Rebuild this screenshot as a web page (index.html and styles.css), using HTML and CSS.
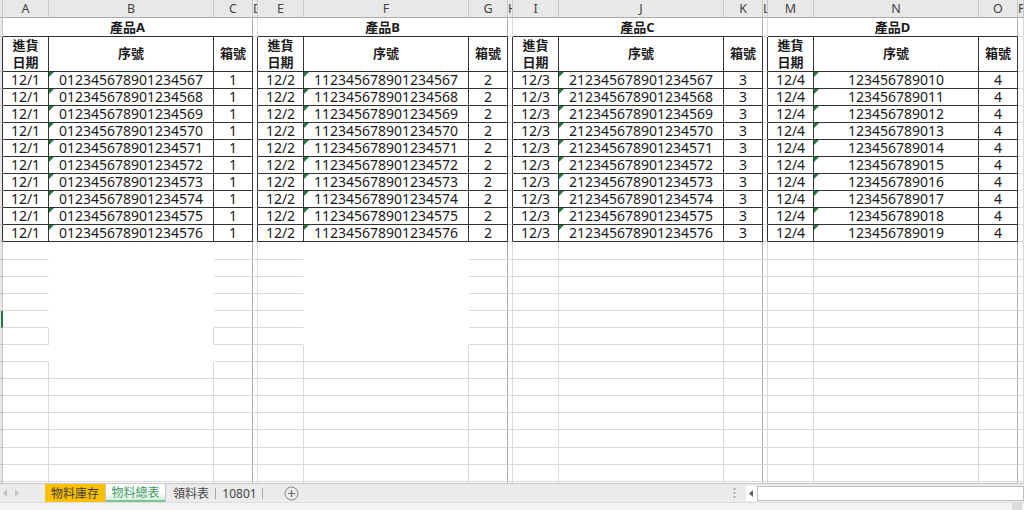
FILE: index.html
```html
<!DOCTYPE html>
<html lang="zh-TW">
<head>
    <meta charset="UTF-8">
    <meta name="viewport" content="width=device-width, initial-scale=1.0">
    <title>物料總表</title>
    <link rel="stylesheet" href="styles.css">
</head>
<body>
    <!-- 工作表 -->
    <div class="sheet">
        <table class="grid">
            <colgroup>
                <col class="w-rh">
                <col class="w-date"><col class="w-serial"><col class="w-box"><col class="w-sp">
                <col class="w-date"><col class="w-serial"><col class="w-box"><col class="w-sp">
                <col class="w-date"><col class="w-serial"><col class="w-box"><col class="w-sp">
                <col class="w-date"><col class="w-serial"><col class="w-box"><col class="w-p">
            </colgroup>
            <thead><tr class="r-letters" id="letters"></tr></thead>
            <tbody id="rows"></tbody>
        </table>
    </div>

    <!-- 工作表標籤 -->
    <div class="tabbar">
        <div class="nav">
            <svg width="6" height="8" viewBox="0 0 6 8"><path d="M5 0 L1 4 L5 8 Z" fill="#c4c4c4"/></svg>
            <svg width="6" height="8" viewBox="0 0 6 8"><path d="M1 0 L5 4 L1 8 Z" fill="#c4c4c4"/></svg>
        </div>
        <div class="tab tab-stock">物料庫存</div>
        <div class="tab tab-active">物料總表</div>
        <div class="tab tab-sep tab-issue">領料表</div>
        <div class="tab tab-sep tab-num">10801</div>
        <div class="add-sheet">
            <svg width="15" height="15" viewBox="0 0 15 15">
                <circle cx="7.5" cy="7.5" r="6.5" fill="none" stroke="#8a8a8a" stroke-width="1"/>
                <path d="M7.5 4 V11 M4 7.5 H11" stroke="#6e6e6e" stroke-width="1.2"/>
            </svg>
        </div>
        <div class="split">
            <svg width="3" height="12" viewBox="0 0 3 12">
                <rect x="0.5" y="1" width="2" height="2" fill="#b0b0b0"/>
                <rect x="0.5" y="5" width="2" height="2" fill="#b0b0b0"/>
                <rect x="0.5" y="9" width="2" height="2" fill="#b0b0b0"/>
            </svg>
        </div>
        <div class="hscroll">
            <div class="scroll-btn">
                <svg width="5" height="7" viewBox="0 0 5 7"><path d="M4 0 L0 3.5 L4 7 Z" fill="#606060"/></svg>
            </div>
            <div class="scroll-track"></div>
        </div>
    </div>
    <div class="statusbar"><span class="corner"></span></div>

    <script>
        // 四組產品資料
        const products = [
            { name: '產品A', date: '12/1', prefix: '0123456789012345', start: 67, box: '1' },
            { name: '產品B', date: '12/2', prefix: '1123456789012345', start: 67, box: '2' },
            { name: '產品C', date: '12/3', prefix: '2123456789012345', start: 67, box: '3' },
            { name: '產品D', date: '12/4', prefix: '1234567890', start: 10, box: '4' }
        ];
        const letters = ['', 'A', 'B', 'C', 'D', 'E', 'F', 'G', 'H', 'I', 'J', 'K', 'L', 'M', 'N', 'O', 'P'];

        // 空白列中沒有格線的儲存格
        function emptyCellClass(col, k) {
            if (col === 1 && k <= 6 && k !== 5) return 'nr';
            if (col === 2 && k <= 6) return k === 5 ? 'nb' : 'nb nr';
            if (col === 5 && k <= 5) return 'nr';
            if (col === 6 && k <= 5) return 'nb nr';
            return '';
        }

        function buildSheet() {
            document.getElementById('letters').innerHTML =
                letters.map((l, i) => `<th class="${i === 0 ? 'rh' : ''}">${l}</th>`).join('');

            let html = '';

            // 標題列
            html += '<tr class="r-title"><td class="rh"></td>';
            products.forEach(p => {
                html += `<td colspan="3" class="title">${p.name}</td><td class="sp"></td>`;
            });
            html += '</tr>';

            // 欄位名稱
            html += '<tr class="r-head"><td class="rh edge"></td>';
            products.forEach((p, b) => {
                html += '<td class="hd box">進貨<br>日期</td><td class="hd box">序號</td><td class="hd box">箱號</td>';
                html += `<td class="${b < 3 ? 'edge' : ''}"></td>`;
            });
            html += '</tr>';

            // 資料列
            for (let i = 0; i < 10; i++) {
                html += '<tr class="r-data"><td class="rh edge"></td>';
                products.forEach((p, b) => {
                    html += `<td class="box">${p.date}</td>`;
                    html += `<td class="box txt">${p.prefix}${p.start + i}</td>`;
                    html += `<td class="box">${p.box}</td>`;
                    html += `<td class="${b < 3 ? 'edge' : ''}"></td>`;
                });
                html += '</tr>';
            }

            // 空白列
            for (let k = 0; k < 15; k++) {
                html += `<tr class="r-empty"><td class="rh${k === 4 ? ' sel' : ''}"></td>`;
                for (let col = 1; col <= 16; col++) {
                    let cls = emptyCellClass(col, k);
                    if (col % 4 === 3) cls += ' end';
                    html += `<td class="${cls.trim()}"></td>`;
                }
                html += '</tr>';
            }

            document.getElementById('rows').innerHTML = html;
        }

        document.addEventListener('DOMContentLoaded', buildSheet);
    </script>
</body>
</html>
```

FILE: styles.css
```css
* {
    box-sizing: border-box;
}

body {
    margin: 0;
    width: 1024px;
    height: 510px;
    overflow: hidden;
    background: #fff;
    font-family: "Noto Sans", "Noto Sans CJK TC", sans-serif;
    color: #1a1a1a;
}

/* 工作表 */
.sheet {
    height: 483px;
    overflow: hidden;
}

.grid {
    border-collapse: separate;
    border-spacing: 0;
    table-layout: fixed;
    width: 1024px;
}

.w-rh { width: 3px; }
.w-date { width: 46px; }
.w-serial { width: 165px; }
.w-box { width: 39px; }
.w-sp { width: 5px; }
.w-p { width: 6px; }

.grid th,
.grid td {
    padding: 0;
    border-right: 1px solid #dadada;
    border-bottom: 1px solid #dadada;
    white-space: nowrap;
    text-align: center;
    vertical-align: middle;
    font-size: 14px;
    line-height: 16px;
    position: relative;
}

/* 欄標題 */
.r-letters { height: 18px; }

.grid th {
    background: #e8e8e8;
    border-right-color: #c8c8c8;
    border-bottom-color: #ababab;
    font-weight: normal;
    font-size: 12.5px;
    color: #444;
    overflow: hidden;
}

.grid th:nth-child(4n+1) {
    text-align: left;
}

.grid th:first-child {
    text-align: center;
}

.r-title { height: 18.5px; }
.r-head { height: 34.5px; }
.r-data { height: 17.1px; }
.r-empty { height: 17.1px; }

.grid td.rh {
    background: #e8e8e8;
    border-right-color: #c4c4c4;
    border-bottom-color: #c4c4c4;
}

.grid td.rh.sel {
    border-right: 2px solid #217346;
}

/* 表格框線 */
.grid td.box {
    border-right-color: #333;
    border-bottom-color: #333;
}

.grid td.edge {
    border-right-color: #333;
}

.grid td.title {
    border-bottom-color: #333;
    border-right-color: #b0b0b0;
    font-weight: bold;
    font-size: 13px;
}

.grid td.hd {
    font-weight: bold;
    font-size: 13px;
    line-height: 17px;
}

/* 以文字儲存的數字 */
.grid td.txt::before {
    content: '';
    position: absolute;
    top: 0;
    left: 0;
    border-top: 5px solid #1f7a3d;
    border-right: 5px solid transparent;
}

.grid td.end {
    border-right-color: #b0b0b0;
}

.grid td.nr {
    border-right-color: transparent;
}

.grid td.nb {
    border-bottom-color: transparent;
}

/* 工作表標籤列 */
.tabbar {
    height: 19px;
    display: flex;
    align-items: stretch;
    background: #ebebeb;
    border-top: 1px solid #c6c6c6;
    font-size: 12px;
}

.nav {
    width: 45px;
    display: flex;
    align-items: center;
    gap: 6px;
    padding-left: 2px;
}

.tab {
    display: flex;
    align-items: center;
    justify-content: center;
    color: #444;
    position: relative;
}

.tab-stock {
    width: 60px;
    background: #ffc000;
    color: #3a3a3a;
}

.tab-active {
    width: 61px;
    background: linear-gradient(to bottom, #fff 55%, #d3ecdc 100%);
    border-bottom: 2px solid #7cc496;
    border-left: 1px solid #c8c8c8;
    border-right: 1px solid #c8c8c8;
    color: #3c9a62;
}

.tab-issue { width: 50px; }
.tab-num { width: 47px; }

.tab-sep::after {
    content: '';
    position: absolute;
    right: 0;
    top: 4px;
    height: 11px;
    width: 1px;
    background: #a8a8a8;
}

.add-sheet {
    margin-left: 21px;
    display: flex;
    align-items: center;
}

.split {
    margin-left: auto;
    width: 13px;
    display: flex;
    align-items: center;
}

.hscroll {
    width: 278px;
    display: flex;
    align-items: center;
}

.scroll-btn {
    width: 11px;
    height: 15px;
    background: #fff;
    display: flex;
    align-items: center;
    justify-content: center;
}

.scroll-track {
    flex: 1;
    height: 15px;
    background: #fff;
    border: 1px solid #c2c2c2;
}

/* 狀態列 */
.statusbar {
    height: 8px;
    background: #f3f3f3;
    border-top: 1px solid #dedede;
    display: flex;
    justify-content: flex-end;
}

.corner {
    width: 10px;
    height: 7px;
    margin-right: 2px;
    background: #dcdcdc;
}
```
